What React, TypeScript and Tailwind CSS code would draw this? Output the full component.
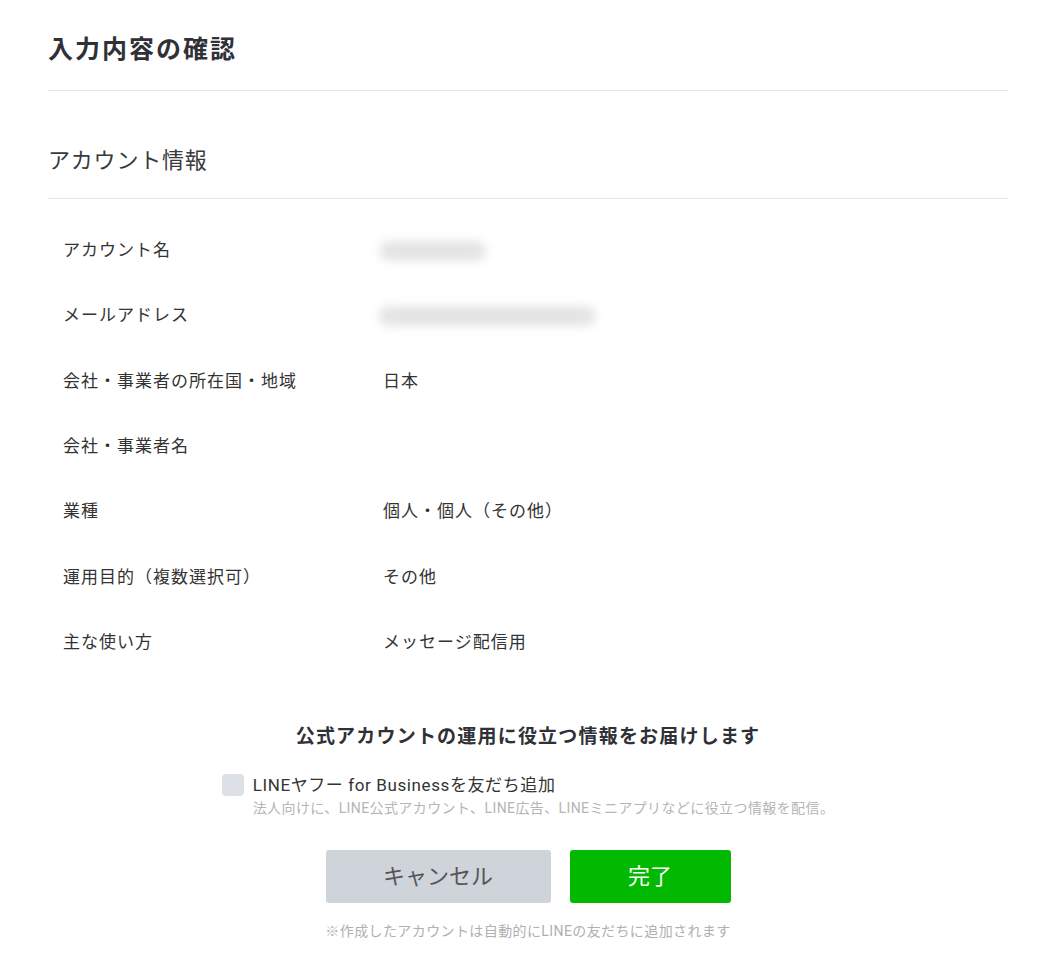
const rows: { label: string; value?: string; blur?: number }[] = [
  { label: "アカウント名", blur: 107 },
  { label: "メールアドレス", blur: 217 },
  { label: "会社・事業者の所在国・地域", value: "日本" },
  { label: "会社・事業者名", value: "" },
  { label: "業種", value: "個人・個人（その他）" },
  { label: "運用目的（複数選択可）", value: "その他" },
  { label: "主な使い方", value: "メッセージ配信用" },
];

export default function App() {
  return (
    <div
      className="min-h-screen bg-white text-[#333] pl-[48px] pr-[56px]"
      style={{ fontFamily: 'Roboto, "Noto Sans CJK JP", sans-serif' }}
    >
      <div className="border-b border-[#e5e5e5] pt-[34px] pb-[24px]">
        <h1 className="text-[25px] leading-[32px] tracking-[2px] font-bold text-[#2f3136]">入力内容の確認</h1>
      </div>

      <div className="border-b border-[#e5e5e5] pt-[55px] pb-[22px]">
        <h2 className="text-[22px] leading-[30px] tracking-[0.8px] font-normal text-[#3a3a3a]">アカウント情報</h2>
      </div>

      <div className="pt-[19px]">
        {rows.map((r) => (
          <div key={r.label} className="flex items-center h-[65.33px] pl-[15px] text-[17px] tracking-[1px]">
            <div className="w-[320px] shrink-0">{r.label}</div>
            <div className="flex items-center">
              {r.blur ? (
                <div
                  className="h-[20px] rounded-full bg-[#e4e4e4] blur-[5px] -ml-[4px]"
                  style={{ width: r.blur }}
                />
              ) : (
                r.value
              )}
            </div>
          </div>
        ))}
      </div>

      <div className="mt-[49px] flex flex-col items-center">
        <p className="text-[19px] leading-[26px] tracking-[1.2px] font-bold text-[#2f3136]">
          公式アカウントの運用に役立つ情報をお届けします
        </p>

        <div className="mt-[24px] flex items-start gap-[9px]">
          <div className="w-[22px] h-[22px] rounded-[4px] bg-[#dde0e6] shrink-0" />
          <div>
            <div className="text-[17px] leading-[22px] tracking-[0.6px] text-[#333]">LINEヤフー for Businessを友だち追加</div>
            <div className="text-[14px] leading-[20px] tracking-[0.4px] mt-[2px] text-[#b5b5b5]">
              法人向けに、LINE公式アカウント、LINE広告、LINEミニアプリなどに役立つ情報を配信。
            </div>
          </div>
        </div>

        <div className="mt-[32px] flex gap-[19px]">
          <button className="w-[225px] h-[53px] rounded-[3px] bg-[#cfd3da] text-[22px] text-[#555]">
            キャンセル
          </button>
          <button className="w-[161px] h-[53px] rounded-[3px] bg-[#00b900] text-[22px] text-white">
            完了
          </button>
        </div>

        <p className="mt-[18px] text-[14px] leading-[20px] tracking-[0.4px] text-[#b0b0b0]">
          ※作成したアカウントは自動的にLINEの友だちに追加されます
        </p>
      </div>
    </div>
  );
}
